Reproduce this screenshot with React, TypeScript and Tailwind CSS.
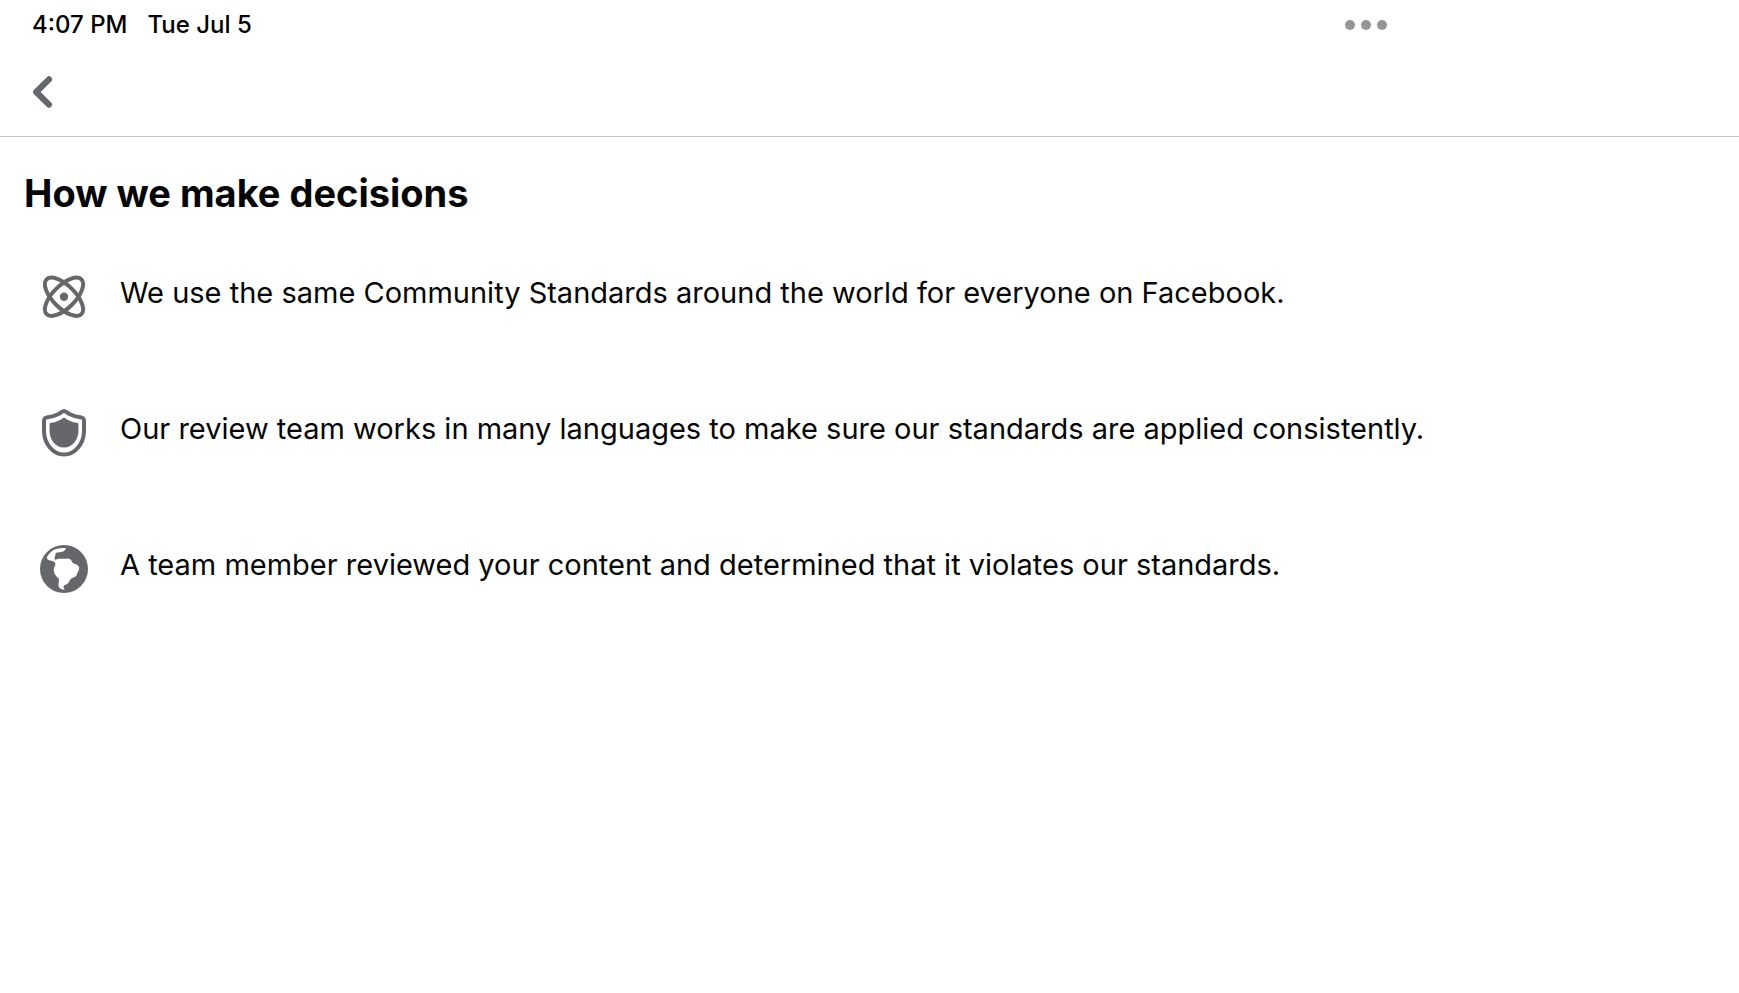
function AtomIcon() {
  return (
    <svg viewBox="0 0 48 48" className="size-12 shrink-0 text-[#65676b]" aria-hidden="true">
      <g fill="none" stroke="currentColor" strokeWidth="4">
        <ellipse cx="24" cy="23.8" rx="24.6" ry="11.2" transform="rotate(45 24 23.8)" />
        <ellipse cx="24" cy="23.8" rx="24.6" ry="11.2" transform="rotate(-45 24 23.8)" />
      </g>
      <circle cx="24" cy="23.8" r="4.2" fill="currentColor" />
    </svg>
  );
}

function ShieldIcon() {
  return (
    <svg viewBox="0 0 48 48" className="size-12 shrink-0 text-[#65676b]" aria-hidden="true">
      <path
        d="M24 2C25.2 2 27 3.6 30 5.2C34 7.2 37.6 8 41.6 8.6C43.3 9 44 9.8 44 11.6V22C44 34.5 35 45.6 24 45.6S4 34.5 4 22V11.6C4 9.8 4.7 9 6.4 8.6C10.4 8 14 7.2 18 5.2C21 3.6 22.8 2 24 2Z"
        fill="none"
        stroke="currentColor"
        strokeWidth="4"
      />
      <path
        d="M24 8.4C28 11.4 32 13 37 13.8C38 14 38.4 14.6 38.4 15.6V22C38.4 30.5 32.5 38.6 24 38.6S9.6 30.5 9.6 22V15.6C9.6 14.6 10 14 11 13.8C16 13 20 11.4 24 8.4Z"
        fill="currentColor"
      />
    </svg>
  );
}

function GlobeIcon() {
  return (
    <svg viewBox="0 0 48 48" className="size-12 shrink-0 text-[#65676b]" aria-hidden="true">
      <circle cx="24" cy="24" r="24" fill="currentColor" />
      <path
        d="M7 12C9 8 12.5 5 16.2 4C19.5 3.2 23 2.8 26 3.2C25 5.2 24 6.6 21.4 7C18.8 7.6 16.4 7 15.2 8.8C16.4 10 14 12 14.8 14.4C16 15.2 17 13.8 18.6 13.8C21.4 13.4 24 14.2 27 13.6C29.8 13.4 31.4 15 32.4 17.6C34.6 19.4 38.6 19.8 39.2 22.4C39.4 25.2 37.6 26.6 37 29C36.2 32.8 32 32.2 30.4 34.6C28.8 37.4 28 39.6 25 40C22.8 41 23.2 42.6 24.8 44.4C21.2 45 18.6 43 18.4 40C18.4 37.4 19.8 35.6 18.6 33.6C17 31.6 15 30.6 14.2 27.8C13.4 24.6 13.6 23 15.2 20.6C15.8 18.6 15 17 13.2 16.2C11.4 15.6 9 15.8 7.8 14.6C7 13.8 6.8 13 7 12Z"
        fill="white"
      />
    </svg>
  );
}

const reasons = [
  {
    icon: <AtomIcon />,
    text: "We use the same Community Standards around the world for everyone on Facebook.",
  },
  {
    icon: <ShieldIcon />,
    text: "Our review team works in many languages to make sure our standards are applied consistently.",
  },
  {
    icon: <GlobeIcon />,
    text: "A team member reviewed your content and determined that it violates our standards.",
  },
];

function App() {
  return (
    <div className="min-h-screen bg-white font-['Inter',sans-serif] text-[#050505]">
      <div className="flex h-[50px] items-center justify-between pl-8 pr-[352px] text-2xl font-medium text-black">
        <div className="flex gap-5">
          <span>4:07 PM</span>
          <span>Tue Jul 5</span>
        </div>
        <button type="button" aria-label="Multitasking" className="flex gap-[6px]">
          <span className="size-[10px] rounded-full bg-[#959595]" />
          <span className="size-[10px] rounded-full bg-[#959595]" />
          <span className="size-[10px] rounded-full bg-[#959595]" />
        </button>
      </div>

      <header className="flex h-[87px] items-center border-b border-[#c8c8c8] pl-8">
        <button type="button" aria-label="Back" className="text-[#65676f]">
          <svg viewBox="0 0 22 34" className="h-[34px] w-[22px]" aria-hidden="true">
            <path
              d="M17 3.4L4.2 16L17 28.6"
              fill="none"
              stroke="currentColor"
              strokeWidth="6.2"
              strokeLinecap="round"
              strokeLinejoin="round"
            />
          </svg>
        </button>
      </header>

      <main className="px-6 pt-8">
        <h1 className="text-[38px] leading-[48px] font-bold">How we make decisions</h1>
        <ul className="mt-14 flex flex-col gap-[88px] pl-4">
          {reasons.map((reason) => (
            <li key={reason.text} className="flex items-start gap-8">
              {reason.icon}
              <p className="text-[29px] leading-[40px]">{reason.text}</p>
            </li>
          ))}
        </ul>
      </main>
    </div>
  );
}

export default App;
